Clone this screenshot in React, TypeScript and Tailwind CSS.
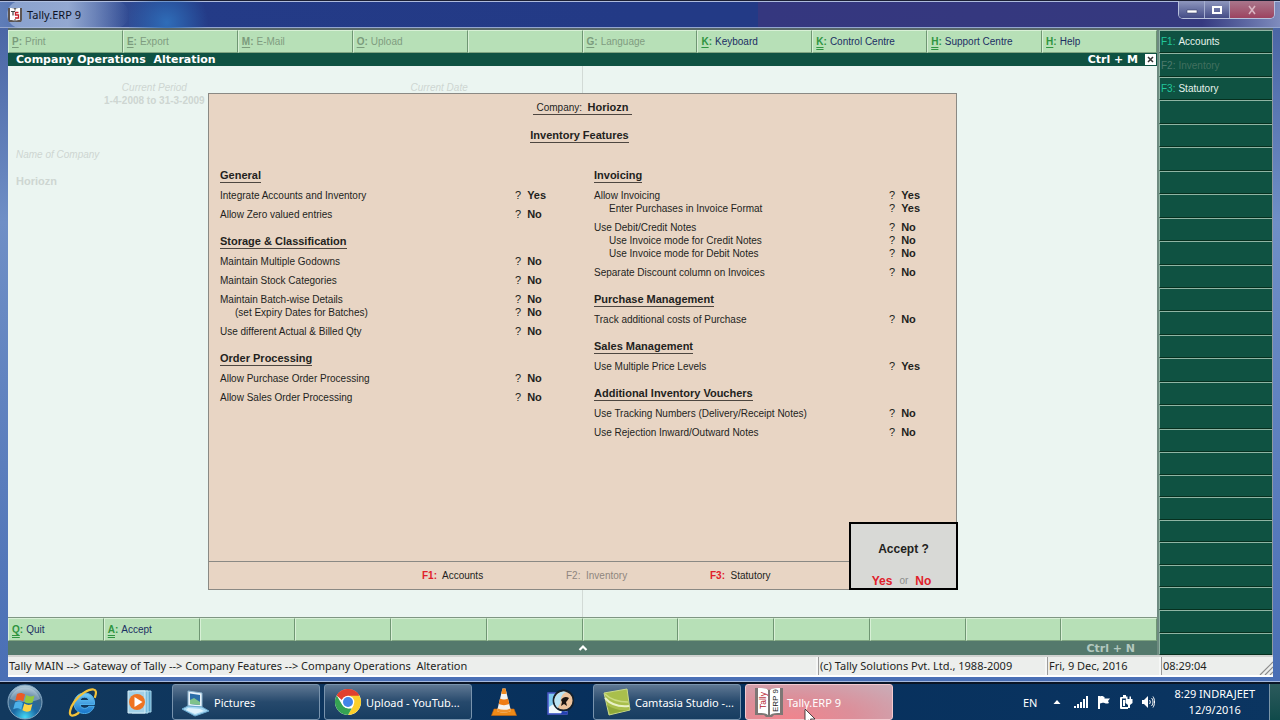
import type { ReactNode } from "react";

type Key = { k?: string; label?: string; disabled?: boolean; double?: boolean };
type Row = { label: string; value: string; sub?: boolean };
type Section = { title: string; rows: Row[] };

const menu: Key[] = [
  { k: "P", label: "Print", disabled: true },
  { k: "E", label: "Export", disabled: true },
  { k: "M", label: "E-Mail", disabled: true },
  { k: "O", label: "Upload", disabled: true },
  {},
  { k: "G", label: "Language", disabled: true },
  { k: "K", label: "Keyboard" },
  { k: "K", label: "Control Centre", double: true },
  { k: "H", label: "Support Centre", double: true },
  { k: "H", label: "Help" },
];

const actions: Key[] = [
  { k: "Q", label: "Quit", double: true },
  { k: "A", label: "Accept", double: true },
  {}, {}, {}, {}, {}, {}, {}, {}, {}, {},
];

const sideKeys: Key[] = [
  { k: "F1", label: "Accounts" },
  { k: "F2", label: "Inventory", disabled: true },
  { k: "F3", label: "Statutory" },
  ...Array.from({ length: 24 }, () => ({})),
];

const leftSections: Section[] = [
  {
    title: "General",
    rows: [
      { label: "Integrate Accounts and Inventory", value: "Yes" },
      { label: "Allow Zero valued entries", value: "No" },
    ],
  },
  {
    title: "Storage & Classification",
    rows: [
      { label: "Maintain Multiple Godowns", value: "No" },
      { label: "Maintain Stock Categories", value: "No" },
      { label: "Maintain Batch-wise Details", value: "No" },
      { label: "(set Expiry Dates for Batches)", value: "No", sub: true },
      { label: "Use different Actual & Billed Qty", value: "No" },
    ],
  },
  {
    title: "Order Processing",
    rows: [
      { label: "Allow Purchase Order Processing", value: "No" },
      { label: "Allow Sales Order Processing", value: "No" },
    ],
  },
];

const rightSections: Section[] = [
  {
    title: "Invoicing",
    rows: [
      { label: "Allow Invoicing", value: "Yes" },
      { label: "Enter Purchases in Invoice Format", value: "Yes", sub: true },
      { label: "Use Debit/Credit Notes", value: "No" },
      { label: "Use Invoice mode for Credit Notes", value: "No", sub: true },
      { label: "Use Invoice mode for Debit Notes", value: "No", sub: true },
      { label: "Separate Discount column on Invoices", value: "No" },
    ],
  },
  { title: "Purchase Management", rows: [{ label: "Track additional costs of Purchase", value: "No" }] },
  { title: "Sales Management", rows: [{ label: "Use Multiple Price Levels", value: "Yes" }] },
  {
    title: "Additional Inventory Vouchers",
    rows: [
      { label: "Use Tracking Numbers (Delivery/Receipt Notes)", value: "No" },
      { label: "Use Rejection Inward/Outward Notes", value: "No" },
    ],
  },
];

function KeyButton({ item }: { item: Key }) {
  const keyColor = item.disabled ? "text-[#7b9b7c]" : "text-[#2f9440]";
  const labelColor = item.disabled ? "text-[#7f9c80]" : "text-[#1b2f63]";
  const line = item.double ? "decoration-double" : "decoration-solid";
  return (
    <button
      type="button"
      disabled={item.disabled || !item.k}
      aria-label={item.k ? undefined : "Unassigned"}
      className="flex min-w-0 items-center gap-[3px] border-t border-r border-b border-l border-t-[#d8f0d6] border-r-[#6f9673] border-b-[#7fa581] border-l-[#d8f0d6] bg-[#b7e0b7] pl-[3px] text-left text-[10px] whitespace-nowrap"
    >
      {item.k && (
        <>
          <span className={`${keyColor} font-bold`}>
            <span className={`underline underline-offset-2 decoration-1 ${line}`}>{item.k}</span>:
          </span>
          <span className={labelColor}>{item.label}</span>
        </>
      )}
    </button>
  );
}

function SideButton({ item, tall }: { item: Key; tall: boolean }) {
  return (
    <button
      type="button"
      disabled={item.disabled || !item.k}
      aria-label={item.k ? undefined : "Unassigned"}
      className={`flex min-h-0 basis-0 items-center gap-[3px] border-t border-b border-l border-t-[#8fb5a4] border-b-[#06301f] border-l-[#8fb5a4] bg-[#0f5242] pl-px text-left text-[10px] ${tall ? "grow-[47]" : "grow-[45]"}`}
    >
      {item.k && (
        <>
          <span className={item.disabled ? "text-[#4c7a6d]" : "text-[#22c69c]"}>{item.k}:</span>
          <span className={item.disabled ? "text-[#41705f]" : "text-[#e6f3ec]"}>{item.label}</span>
        </>
      )}
    </button>
  );
}

function SectionList({ sections, valueWidth }: { sections: Section[]; valueWidth: string }) {
  return (
    <div className="flex min-w-0 flex-col gap-[13px]">
      {sections.map((s) => (
        <section key={s.title}>
          <h3 className="mb-[6px] w-fit border-b border-[#4d4640] leading-[14px] font-bold">{s.title}</h3>
          <dl>
            {s.rows.map((r, i) => (
              <div key={r.label} className={`flex leading-[13px] ${r.sub || i === 0 ? "" : "mt-[6px]"}`}>
                <dt className={`flex-1 text-[10px] whitespace-nowrap ${r.sub ? "pl-[15px]" : ""}`}>{r.label}</dt>
                <dd className={`flex gap-[6px] ${valueWidth}`}>
                  <span>?</span>
                  <b>{r.value}</b>
                </dd>
              </div>
            ))}
          </dl>
        </section>
      ))}
    </div>
  );
}

function TallyIcon() {
  return (
    <svg viewBox="0 0 16 16" className="size-4">
      <path d="M1 1h14v12l-1 2H9l-1-1-1 1H2l-1-2z" fill="#5d5552" />
      <path d="M3 1c2 0 4 0 5 1 1-1 3-1 5-1v12c-2 0-4 0-5 1-1-1-3-1-5-1z" fill="#fff" />
      <path d="M4 4.500h4M6 4.500v4" stroke="#444" strokeWidth="1.200" fill="none" />
      <path d="M11.500 5.500h-3v2.500h3v3H8" stroke="#c8202c" strokeWidth="1.300" fill="none" />
      <path d="M8 1v2.500M8 12v3" stroke="#444" strokeWidth="1" />
    </svg>
  );
}

function TallyBookIcon() {
  return (
    <svg viewBox="0 0 32 32" className="size-8">
      <path d="M2 2h9l5 2 5-2h9v27h-9l-2 2h-6l-2-2H2z" fill="#7d7775" />
      <path d="M5 2c4 0 8 0 10 2v25c-3-2-6-2-10-2zM27 2c-4 0-8 0-10 2v25c3-2 6-2 10-2z" fill="#fff" />
      <path d="M16 4v25" stroke="#777" strokeDasharray="3 1.5" />
      <text x="0" y="0" transform="translate(12.5 23) rotate(-90)" fontFamily="Liberation Sans" fontSize="8.5" fill="#b52432">Tally</text>
      <text x="0" y="0" transform="translate(25 26) rotate(-90)" fontFamily="Liberation Sans" fontSize="8" fill="#222">ERP 9</text>
    </svg>
  );
}

function StartOrb() {
  return (
    <svg viewBox="0 0 36 36" className="size-9">
      <defs>
        <radialGradient id="orb" cx="50%" cy="95%" r="90%">
          <stop offset="0" stopColor="#45d9f5" />
          <stop offset="0.4" stopColor="#1b6aa5" />
          <stop offset="0.75" stopColor="#396487" />
          <stop offset="1" stopColor="#a8c4d6" />
        </radialGradient>
      </defs>
      <circle cx="18" cy="18" r="17" fill="url(#orb)" stroke="#86a9c4" />
      <path d="M3 15a15.500 15.500 0 0 1 30 0c-8 4-21 4-30 0z" fill="#d7e6f0" opacity="0.4" />
      <path d="M10 10c3-1.500 5-1.500 8 .5l-1.800 7c-3-2-5-2-8-.5z" fill="#ec5a25" />
      <path d="M19.200 11c3 1.800 5 1.800 8.300.4l-1.900 7c-3 1.400-5 1.300-8.200-.5z" fill="#92c83e" />
      <path d="M8 18.500c3-1.500 5-1.500 8 .5l-1.800 6.800c-3-2-5-1.900-8-.5z" fill="#4cb1ea" />
      <path d="M17.200 19.500c3 1.800 5 1.800 8.200.4l-1.800 6.800c-3 1.400-5 1.400-8.200-.4z" fill="#fcd344" />
    </svg>
  );
}

function IeIcon() {
  return (
    <svg viewBox="0 0 32 32" className="size-8">
      <defs>
        <linearGradient id="ie" x1="0" y1="0" x2="0" y2="1">
          <stop offset="0" stopColor="#77cdf6" />
          <stop offset="1" stopColor="#1674cb" />
        </linearGradient>
      </defs>
      <path d="M27.500 18.500H13c.4 2.500 2.200 3.800 4.700 3.800 2 0 3.200-.8 4-2h5.500C25.500 25 22 27.500 17.500 27.500c-6.500 0-10.500-4.500-10.500-10S11 7 17.500 7s10.500 4.500 10 11.500zM13 14.500h8.800c-.5-2.300-2-3.300-4.400-3.300s-3.900 1.100-4.400 3.300z" fill="url(#ie)" stroke="#4fb1ee" strokeWidth="1" />
      <path d="M28 11c1.500-4 1.500-7-1.500-7.500C22 2.800 13 8 7.500 15.500 3 22 1.500 28.500 4.500 29.500c2 .6 5-1 7-2.500" fill="none" stroke="#f3c23a" strokeWidth="2.200" strokeLinecap="round" />
    </svg>
  );
}

function WmpIcon() {
  return (
    <svg viewBox="0 0 28 28" className="size-7">
      <path d="M10 3h15v21H10z" fill="#5ea6cc" stroke="#a7d7ec" />
      <path d="M6 3h16v22H6z" fill="#7bbcdd" stroke="#b9e2f3" />
      <path d="M2 3h17v22H2z" fill="#a2d1e8" stroke="#d6eef8" />
      <circle cx="11" cy="14" r="8" fill="#ef7422" />
      <path d="M8.500 9v10l8-5z" fill="#fff" />
    </svg>
  );
}

function PicturesIcon() {
  return (
    <svg viewBox="0 0 32 32" className="size-8">
      <path d="M8 5l14 2v14L8 20z" fill="#e8f3fb" stroke="#8db4cf" />
      <path d="M10 7.500l10 1.500v10L10 18z" fill="#2b6da8" />
      <path d="M10 14l4-2 6 4v3L10 18z" fill="#7fc28b" />
      <path d="M8 20l14 1 7 4-14 5L2 23z" fill="#a8d8f2" stroke="#6ba9cf" />
      <path d="M8 22l12 1 4 2-9 3-9-4z" fill="#dff3fd" />
    </svg>
  );
}

function ChromeIcon() {
  return (
    <svg viewBox="0 0 28 28" className="size-7">
      <circle cx="14" cy="14" r="13" fill="#fff" />
      <path d="M14 14L2.740 7.500A13 13 0 0 1 25.260 7.500z" fill="#e0402f" />
      <path d="M14 7.500h11.260A13 13 0 0 1 14 27l5.600-9.800z" fill="#fbcf2b" />
      <path d="M2.740 7.500L8.400 17.200 14 20.500h3.700L14 27A13 13 0 0 1 2.740 7.500z" fill="#35a353" />
      <path d="M2.740 7.500A13 13 0 0 1 25.260 7.500H14a6.500 6.500 0 0 0-6.200 4.500z" fill="#e0402f" />
      <circle cx="14" cy="14" r="6.300" fill="#fff" />
      <circle cx="14" cy="14" r="5" fill="#4285e8" />
    </svg>
  );
}

function VlcIcon() {
  return (
    <svg viewBox="0 0 28 30" className="h-[30px] w-7">
      <path d="M4 22h20l2.500 6.500h-25z" fill="#ef8a17" stroke="#c9660a" strokeWidth=".6" />
      <path d="M12.500 1.500h3L21 24c-4 2-10 2-14 0z" fill="#f4f2ee" />
      <path d="M12.500 1.500h3l1.200 5c-1.700.8-3.800.8-5.400 0z" fill="#f08a20" />
      <path d="M10 11.500c2.500 1.200 5.500 1.200 8 0l1.300 5.500c-3.300 1.500-7.300 1.500-10.600 0z" fill="#ee7c14" />
      <path d="M7.600 21.500c4 1.800 8.800 1.800 12.800 0L21 24c-4 2-10 2-14 0z" fill="#f0912b" />
    </svg>
  );
}

function EyeIcon() {
  return (
    <svg viewBox="0 0 28 30" className="h-[30px] w-7">
      <path d="M2 6h19v21H2z" fill="#7fc9ee" stroke="#4b55c8" strokeWidth="1.500" />
      <path d="M3 20l6-4 8 8v2H3z" fill="#eef7fb" />
      <circle cx="17.500" cy="13.500" r="10" fill="#edc39d" stroke="#14202c" strokeWidth="1.800" />
      <path d="M8.500 12c2-6 8-9 12-7-5 2-6 6-6 11l-3 5c-2-2-3.500-5-3-9z" fill="#b9e3f4" />
      <path d="M15 13c2-3 5-4 8-2l-2 3-1 1 1 4-3-2-3 2 1-4z" fill="#1b1411" />
      <path d="M16 24l5 1v2h-6z" fill="#2340b4" />
    </svg>
  );
}

function CamtasiaIcon() {
  return (
    <svg viewBox="0 0 30 30" className="size-[30px]">
      <path d="M2 6l23-4 3 21-21 5z" fill="#a9bf4c" stroke="#c9d98a" />
      <path d="M3 11c6 7 14 9 24 8" fill="none" stroke="#e9f1c6" strokeWidth="2" />
      <path d="M3 7c6 6 14 8 23 8" fill="none" stroke="#cbdb83" strokeWidth="1.500" />
      <path d="M5 18c6 4 13 6 22 5l-19 4z" fill="#8fa93a" />
    </svg>
  );
}

function TaskButton({ icon, children, active }: { icon: ReactNode; children: ReactNode; active?: boolean }) {
  const look = active
    ? "border-[#f3c9cf] bg-[radial-gradient(ellipse_at_30%_100%,#f0848d,#dc8f9a_45%,#c9adb8)]"
    : "border-[#7893ad] bg-linear-to-b from-[#5f7893] via-[#26496c] to-[#173d61]";
  return (
    <button type="button" className={`flex h-9 w-[148px] items-center gap-[2px] rounded-[3px] border pl-[7px] text-left text-[11px] whitespace-nowrap text-white ${look}`}>
      <span className="flex w-8 shrink-0 justify-center">{icon}</span>
      <span>{children}</span>
    </button>
  );
}

export default function App() {
  return (
    <div className="flex min-h-screen flex-col overflow-hidden bg-[#4a6fb5] font-['Liberation_Sans',Arial,sans-serif] text-[11px] leading-[13px] text-[#231f1d]">
      <header className="flex h-7 items-start border-t border-t-[#1c2034] bg-linear-to-r from-[#5f7db8] from-0% via-[#243b87] via-13% to-[#233a86] to-50% pl-[7px] shadow-[inset_0_1px_0_#aebbdd,inset_0_-1px_0_#94a6cf]">
        <div className="flex h-full items-center gap-1 rounded-full bg-linear-to-r from-[#a9bddf]/60 via-[#b4c6e4]/70 to-transparent pr-12">
          <TallyIcon />
          <h1 className="font-['Noto_Sans',sans-serif] text-[11px] text-[#0d1324]">Tally.ERP 9</h1>
        </div>
        <div aria-hidden="true" className="h-full flex-1 bg-[radial-gradient(circle_at_6%_80%,#2f6db8_0,transparent_7%)]" />
        <div className="flex h-full w-[41%] items-start justify-end bg-linear-to-r from-[#35377f] via-[#35397f] via-85% to-[#7f8cbd] pr-[5px] shadow-[inset_0_1px_0_#aebbdd,inset_0_-1px_0_#94a6cf]">
          <div className="flex h-[18px] overflow-hidden rounded-b-[5px] border border-t-0 border-[#b9c1dc]">
            <button type="button" aria-label="Minimize" className="flex w-[26px] items-center justify-center border-r border-[#a6afd0] bg-linear-to-b from-[#8f97be] to-[#454c86]">
              <svg viewBox="0 0 12 10" className="h-[10px] w-3"><path d="M1 5h10v3H1z" fill="#fff" stroke="#3b4168" strokeWidth=".6" /></svg>
            </button>
            <button type="button" aria-label="Maximize" className="flex w-[25px] items-center justify-center border-r border-[#a6afd0] bg-linear-to-b from-[#8f97be] to-[#454c86]">
              <svg viewBox="0 0 12 10" className="h-[10px] w-3"><path d="M2 2h8v6H2z" fill="none" stroke="#fff" strokeWidth="2" /></svg>
            </button>
            <button type="button" aria-label="Close" className="flex w-[44px] items-center justify-center bg-linear-to-b from-[#a9768c] to-[#9c4260]">
              <svg viewBox="0 0 10 10" className="size-[10px]"><path d="M2 1l6 8M8 1L2 9" stroke="#d9b5c2" strokeWidth="1.600" /></svg>
            </button>
          </div>
        </div>
      </header>

      <main className="flex flex-1 flex-col bg-linear-to-b from-[#4b66a5] via-[#6f8fc6] via-30% to-[#4a6fb5] pr-[7px] pl-2">
        <div className="flex flex-1 border-t-2 border-[#58686a]">
          <div className="flex min-w-0 flex-1 flex-col">
            <nav aria-label="Menu" className="grid h-[23px] grid-cols-10">
              {menu.map((m, i) => <KeyButton key={i} item={m} />)}
            </nav>
            <div className="flex h-[13px] items-center bg-[#0f5242] pl-2 font-['DejaVu_Sans',Verdana,sans-serif] font-bold whitespace-pre text-white">
              <h2 className="flex-1">Company Operations  Alteration</h2>
              <span className="pr-[7px]">Ctrl + M</span>
              <button type="button" aria-label="Close screen" className="mr-px flex size-[11px] items-center justify-center bg-white">
                <svg viewBox="0 0 9 9" className="size-[9px]"><path d="M2 2l5 5M7 2L2 7" stroke="#333" strokeWidth="1.500" /></svg>
              </button>
            </div>

            <div className="relative grid flex-1 grid-cols-2 bg-[#ebf5f1] text-[10px] text-[#ced6d2]">
              <div className="border-r border-[#d2dad6] pt-[15px]">
                <div className="grid grid-cols-2 pl-1 text-center">
                  <div>
                    <p className="italic">Current Period</p>
                    <p className="font-bold">1-4-2008 to 31-3-2009</p>
                  </div>
                  <p className="italic">Current Date</p>
                </div>
                <p className="mt-[41px] pl-2 italic">Name of Company</p>
                <p className="mt-[14px] pl-2 text-[11px] font-bold">Horiozn</p>
              </div>

              <div role="dialog" aria-label="Inventory Features" className="absolute inset-x-[200px] inset-y-[27px] flex flex-col border border-[#8a8984] bg-[#e8d5c4] text-[11px] text-[#231f1d]">
                <div className="flex flex-col items-center pt-[7px]">
                  <p className="border-b border-[#4d4640] px-[3px]"><span className="text-[10px]">Company:&nbsp; </span><b>Horiozn</b></p>
                  <h2 className="mt-[13px] mr-[6px] border-b border-[#4d4640] leading-[14px] font-bold">Inventory Features</h2>
                </div>
                <div className="mt-[25px] grid flex-1 grid-cols-2 content-start pl-[11px]">
                  <SectionList sections={leftSections} valueWidth="w-[73px]" />
                  <div className="pl-[6px]">
                    <SectionList sections={rightSections} valueWidth="w-[67px]" />
                  </div>
                </div>
                <div className="flex h-7 items-center border-t border-[#8a8984] pl-[213px] text-[10px]">
                  <p className="w-36"><b className="text-[#e0202a]">F1:</b>&nbsp; Accounts</p>
                  <p className="w-36 text-[#8f867e]">F2:&nbsp; Inventory</p>
                  <p className="w-36"><b className="text-[#e0202a]">F3:</b>&nbsp; Statutory</p>
                </div>
                <div role="alertdialog" aria-label="Accept" className="absolute -right-0.5 -bottom-px flex h-[68px] w-[109px] flex-col items-center justify-between border-2 border-black bg-[#d8d9d6] pt-[18px] text-[12px] leading-[14px]">
                  <b>Accept ?</b>
                  <div className="flex gap-[7px] pr-1">
                    <button type="button" className="font-bold text-[#e0202a]">Yes</button>
                    <span className="text-[10px] text-[#8d8d8b]">or</span>
                    <button type="button" className="font-bold text-[#e0202a]">No</button>
                  </div>
                </div>
              </div>
            </div>

            <nav aria-label="Actions" className="grid h-6 grid-cols-12 border-t border-[#7f9683]">
              {actions.map((m, i) => <KeyButton key={i} item={m} />)}
            </nav>
            <div className="grid h-[14px] grid-cols-3 items-center bg-[#54796c] font-['DejaVu_Sans',Verdana,sans-serif] font-bold text-[#b3c8bf]">
              <svg viewBox="0 0 10 8" className="col-start-2 h-2 w-[10px] justify-self-center"><path d="M1.500 6L5 2.500 8.500 6" fill="none" stroke="#fff" strokeWidth="2.200" /></svg>
              <span className="pr-[22px] text-right">Ctrl + N</span>
            </div>
          </div>

          <nav aria-label="Features" className="flex w-[116px] flex-col border-r border-l-2 border-r-[#8e9aa0] border-l-[#6d8a80] bg-[#0f5242]">
            {sideKeys.map((s, i) => <SideButton key={i} item={s} tall={i < 18} />)}
          </nav>
        </div>

        <footer className="flex h-[22px] items-stretch gap-[2px] border-t-2 border-b-2 border-t-[#d0d2d0] border-b-white bg-[#f6f7f6] font-['Noto_Sans',sans-serif] leading-[18px] whitespace-pre">
          <p className="flex-1 bg-[#eceeec] pl-px">Tally MAIN --&gt; Gateway of Tally --&gt; Company Features --&gt; Company Operations  Alteration</p>
          <p className="w-[227px] border-l border-[#9b9b9b] bg-[#eceeec] pl-px">(c) Tally Solutions Pvt. Ltd., 1988-2009</p>
          <p className="w-[112px] border-l border-[#9b9b9b] bg-[#eceeec] pl-px">Fri, 9 Dec, 2016</p>
          <div className="flex w-[112px] items-end justify-between border-l border-[#9b9b9b] bg-[#eceeec] pl-px">
            <span>08:29:04</span>
            <svg viewBox="0 0 14 14" className="size-[14px]"><path d="M1 14L14 1M6 14l8-8M11 14l3-3" stroke="#8b8b8b" strokeWidth="1.200" /></svg>
          </div>
        </footer>
      </main>
      <div className="h-[5px] border-b border-[#a5b9de] bg-[#4a6fb5]" />

      <div className="relative flex h-[38px] items-center border-t-2 border-[#0a1526] bg-linear-to-r from-[#12395e] via-[#062f5c] to-[#0b3561] pl-[7px] font-['Noto_Sans',sans-serif] text-white">
        <button type="button" aria-label="Start"><StartOrb /></button>
        <button type="button" aria-label="Internet Explorer" className="ml-6"><IeIcon /></button>
        <button type="button" aria-label="Media Player" className="ml-[27px]"><WmpIcon /></button>
        <div className="ml-[18px] flex gap-1">
          <TaskButton icon={<PicturesIcon />}>Pictures</TaskButton>
          <TaskButton icon={<ChromeIcon />}>Upload - YouTub...</TaskButton>
        </div>
        <button type="button" aria-label="VLC" className="ml-[18px]"><VlcIcon /></button>
        <button type="button" aria-label="Picture Viewer" className="ml-7"><EyeIcon /></button>
        <div className="ml-[19px] flex gap-1">
          <TaskButton icon={<CamtasiaIcon />}>Camtasia Studio -...</TaskButton>
          <TaskButton icon={<TallyBookIcon />} active>Tally.ERP 9</TaskButton>
        </div>
        <div className="ml-auto flex items-center">
          <span className="mr-4">EN</span>
          <svg viewBox="0 0 8 6" className="mr-3 h-[6px] w-2"><path d="M4 1l3.500 4h-7z" fill="#fff" /></svg>
          <svg viewBox="0 0 16 14" className="mr-2 h-[14px] w-4"><path d="M1 11h2v2H1zM4 9h2v4H4zM7 7h2v6H7zM10 4h2v9h-2zM13 1h2v12h-2z" fill="#fff" /></svg>
          <svg viewBox="0 0 14 14" className="mr-2 size-[14px]"><path d="M1 1h2v13H1zM3 1.500c2-1 3 0 4.500.5v1.500H13l-2 2.500 1 2c-2 1-3 .5-4.500 0S5 8 3 8.500z" fill="#fff" /></svg>
          <svg viewBox="0 0 14 14" className="mr-2 size-[14px]"><path d="M2 2h6v1.500H3V12h6v2H2a1 1 0 0 1-1-1V3a1 1 0 0 1 1-1zM4 0h3v2H4z" fill="#fff" /><path d="M7 5V1.500h1.500V4h2V1.500H12V4h1.500v4L11 10v3H9v-3L6.500 8V4.500zM4 5h2v6H4z" fill="#fff" /></svg>
          <svg viewBox="0 0 14 14" className="mr-[19px] size-[14px]"><path d="M1 5h2l4-4v12L3 9H1z" fill="#fff" /><path d="M8.500 5c1 1.200 1 2.800 0 4M10.500 3c2 2.200 2 5.800 0 8M12 1.500c2 3 2 8 0 11" fill="none" stroke="#fff" /></svg>
          <div className="mr-[14px] text-center leading-4">
            <p>8:29 INDRAJEET</p>
            <p>12/9/2016</p>
          </div>
          <button type="button" aria-label="Show desktop" className="h-9 w-[11px] border-l border-[#7c96a8] bg-linear-to-b from-[#2b5a5c] to-[#0f4a4a]" />
        </div>
        <svg viewBox="0 0 13 18" className="pointer-events-none absolute -bottom-[6px] left-[804px] h-[18px] w-[13px]"><path d="M1 1v14l3.500-3 2.500 5 2-1-2.500-5H11z" fill="#fff" stroke="#222" strokeWidth=".8" /></svg>
      </div>
    </div>
  );
}
